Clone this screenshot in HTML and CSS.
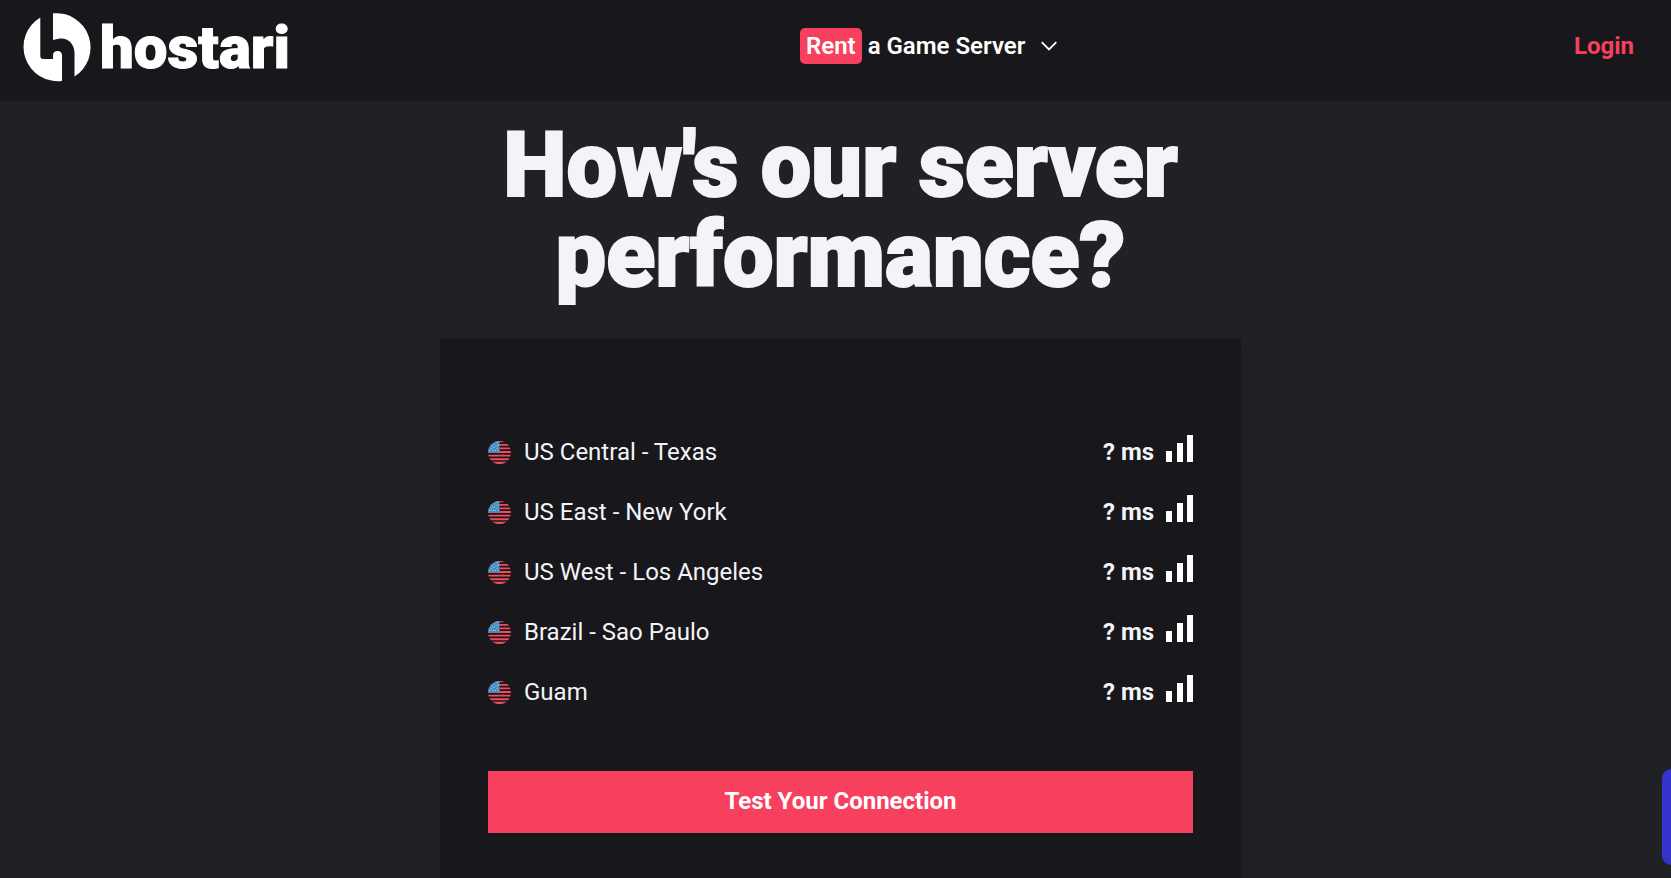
FILE: index.html
```html
<!DOCTYPE html>
<html lang="en">
<head>
<meta charset="utf-8">
<meta name="viewport" content="width=device-width, initial-scale=1">
<title>Hostari - Server performance</title>
<link rel="stylesheet" href="styles.css">
</head>
<body>
<svg class="defs" aria-hidden="true">
  <defs>
    <clipPath id="round"><circle cx="12" cy="12" r="12"/></clipPath>
    <symbol id="flag" viewBox="0 0 24 24">
      <g clip-path="url(#round)">
        <g fill="#ed4c5c">
          <path d="M0 0h24v1.4H0zM0 3h24v2H0zM0 6.700h24v2H0zM0 10.500h24v2H0zM0 14.300h24v2H0zM0 18h24v2H0zM0 21.700h24v2.300H0z"/>
        </g>
        <path fill="#428bc1" d="M0 0h12v12H0z"/>
        <g fill="#fff" opacity=".8">
          <path d="M9.500 1h1v1h-1zM6 2.500h1v1H6zM8 4h1v1H8zM10.500 4h1v1h-1zM4 5h1v1H4zM6 6h1v1H6zM9 7h1v1H9zM3 7.500h1v1H3zM1.500 9.500h1v1h-1zM5 9.500h1v1H5zM7.500 9.500h1v1h-1zM10.500 9.500h1v1h-1z"/>
        </g>
      </g>
    </symbol>
    <symbol id="bars" viewBox="0 0 27 27">
      <path fill="#fff" d="M0 16h6v11H0zM11 8h6v19h-6zM21 0h6v27h-6z"/>
    </symbol>
  </defs>
</svg>
<header class="header">
  <a class="logo" href="#">
    <svg class="logo-mark" viewBox="0 0 70 69" aria-hidden="true">
      <path fill="#fff" d="M18.300 4.500A34.500 34.300 0 0 0 40 68V42.500Q40 38 35.500 38Q31 38 31 42.500V46H21.300Q18.300 46 18.300 43Z"/>
      <path fill="#fff" d="M31 .3A34.300 34.300 0 0 1 52.500 63.500V40C52.500 30 45 24.500 38 25.500Q34 26 31 27Z"/>
    </svg>
    <span class="logo-word">hostari</span>
  </a>
  <button class="menu" type="button">
    <span class="menu-tag">Rent</span>
    <span class="menu-text">a Game Server</span>
    <svg class="chevron" viewBox="0 0 16 10" aria-hidden="true"><path d="M.7 1.200 8 8.500l7.300-7.300" fill="none" stroke="#fff" stroke-width="1.800"/></svg>
  </button>
  <a class="login" href="#">Login</a>
</header>
<main class="main">
  <h1 class="title">How's our server performance?</h1>
  <section class="card">
    <ul class="regions">
      <li class="region"><svg class="flag"><use href="#flag"/></svg><span class="name">US Central - Texas</span><span class="ping">? ms</span><svg class="bars"><use href="#bars"/></svg></li>
      <li class="region"><svg class="flag"><use href="#flag"/></svg><span class="name">US East - New York</span><span class="ping">? ms</span><svg class="bars"><use href="#bars"/></svg></li>
      <li class="region"><svg class="flag"><use href="#flag"/></svg><span class="name">US West - Los Angeles</span><span class="ping">? ms</span><svg class="bars"><use href="#bars"/></svg></li>
      <li class="region"><svg class="flag"><use href="#flag"/></svg><span class="name">Brazil - Sao Paulo</span><span class="ping">? ms</span><svg class="bars"><use href="#bars"/></svg></li>
      <li class="region"><svg class="flag"><use href="#flag"/></svg><span class="name">Guam</span><span class="ping">? ms</span><svg class="bars"><use href="#bars"/></svg></li>
    </ul>
    <button class="test" type="button">Test Your Connection</button>
  </section>
</main>
<button class="side-tab" type="button" aria-label="Open chat"></button>
</body>
</html>
```

FILE: styles.css
```css
* { box-sizing: border-box; }
html { overflow: hidden; }
body {
  margin: 0;
  background: #202125;
  color: #f3f4f8;
  font-family: Roboto, "Liberation Sans", sans-serif;
  font-size: 24px;
  line-height: 36px;
}
button { font: inherit; color: inherit; border: 0; padding: 0; cursor: pointer; }
a { text-decoration: none; }
.defs { position: absolute; width: 0; height: 0; }
.header {
  display: grid;
  grid-template-columns: 800px 1fr auto;
  align-items: start;
  height: 101px;
  background: #18171b;
}
.logo { display: flex; gap: 8px; padding: 13px 0 0 22px; color: #fff; }
.logo-mark { width: 70px; height: 69px; }
.logo-word {
  font-size: 60px;
  font-weight: 900;
  line-height: 69px;
  -webkit-text-stroke: 1px currentColor;
}
.menu {
  display: flex;
  align-items: center;
  justify-self: start;
  gap: 6px;
  margin-top: 28px;
  background: none;
  color: #fff;
  font-weight: 600;
}
.menu-tag { padding: 0 6px; border-radius: 5px; background: #f6405e; }
.chevron { width: 16px; height: 10px; margin-left: 10px; }
.login { margin-top: 28px; padding-right: 37px; color: #f6405e; font-weight: 700; }
.main { padding-left: 10px; }
.title {
  max-width: 800px;
  margin: 20px auto 0;
  font-size: 90px;
  font-weight: 900;
  line-height: 90px;
  text-align: center;
  -webkit-text-stroke: 2px currentColor;
}
.card {
  max-width: 801px;
  margin: 38px auto 0;
  padding: 83px 48px 48px;
  background: #18171b;
  box-shadow: 0 10px 15px rgba(0, 0, 0, .1);
}
.regions { margin: 0 0 49px; padding: 0; list-style: none; }
.region { display: flex; align-items: center; height: 60px; }
.flag { width: 23px; height: 23px; margin-right: 13px; }
.name { flex: 1; }
.ping { font-weight: 700; margin-right: 12px; }
.bars { width: 27px; height: 27px; margin-bottom: 8px; }
.test { display: block; width: 100%; height: 62px; padding-bottom: 2px; background: #f6405e; color: #fff; font-weight: 700; }
.side-tab {
  position: fixed;
  right: 0;
  bottom: 13px;
  width: 9px;
  height: 96px;
  border-radius: 12px 0 0 12px;
  background: #3433cc;
}
```
